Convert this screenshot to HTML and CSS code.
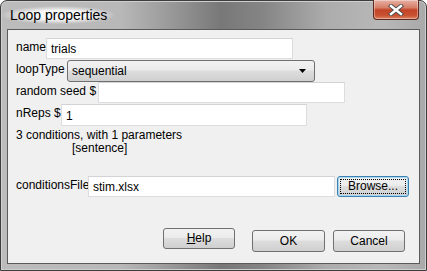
FILE: index.html
```html
<!DOCTYPE html>
<html>
<head>
<meta charset="utf-8">
<link rel="stylesheet" href="styles.css">
</head>
<body>
<div class="window">
  <div class="titlebar">
    <span class="title">Loop properties</span>
    <div class="close">
      <svg width="16" height="12" viewBox="0 0 16 12">
        <path d="M3 2 L13 10 M13 2 L3 10" stroke="#4a4a4a" stroke-width="4.2" stroke-linecap="square"/>
        <path d="M3 2 L13 10 M13 2 L3 10" stroke="#ffffff" stroke-width="2.4" stroke-linecap="square"/>
      </svg>
    </div>
  </div>
  <div class="client">
    <div class="row">
      <span class="label w-name">name</span>
      <div class="input i-name">trials</div>
    </div>
    <div class="row">
      <span class="label w-loop">loopType</span>
      <div class="select">
        <span>sequential</span>
        <svg class="arrow" width="8" height="5" viewBox="0 0 8 5"><path d="M0 0 H7 L3.5 4 Z" fill="#000"/></svg>
      </div>
    </div>
    <div class="row">
      <span class="label w-seed">random seed $</span>
      <div class="input i-seed"></div>
    </div>
    <div class="row">
      <span class="label w-reps">nReps $</span>
      <div class="input i-reps">1</div>
    </div>
    <div class="info">
      <div>3 conditions, with 1 parameters</div>
      <div class="params">[sentence]</div>
    </div>
    <div class="row file-row">
      <span class="label w-file">conditionsFile</span>
      <div class="input i-file">stim.xlsx</div>
      <div class="button browse"><span class="focus">Browse...</span></div>
    </div>
    <div class="buttons">
      <div class="button help"><span><u>H</u>elp</span></div>
      <div class="button ok">OK</div>
      <div class="button cancel">Cancel</div>
    </div>
  </div>
</div>
</body>
</html>
```
FILE: styles.css
```css
html, body {
  margin: 0;
  padding: 0;
}
body {
  width: 427px;
  height: 271px;
  overflow: hidden;
  font-family: "Liberation Sans", Arial, sans-serif;
  font-size: 12px;
  color: #000;
  background: #fff;
}
.window {
  box-sizing: border-box;
  width: 427px;
  height: 271px;
  display: flex;
  flex-direction: column;
  border: 1px solid #3d3d3d;
  border-radius: 7px 7px 0 0;
  padding: 0 6px 6px 6px;
  background: linear-gradient(90deg, #bcbcbc 0px, #b8b8b8 120px, #9c9c9c 165px, #787878 220px, #858585 262px, #acacac 325px, #b8b8b8 380px, #a9a9a9 427px);
  box-shadow: inset 0 0 0 1px #cfcfcf;
}
.titlebar {
  height: 28px;
  flex: none;
  display: flex;
  align-items: flex-start;
  justify-content: space-between;
}
.title {
  margin-top: 5px;
  margin-left: -5px;
  font-size: 14px;
  color: #000;
  padding: 0 8px;
  background: radial-gradient(ellipse at center, rgba(255,255,255,0.9) 35%, rgba(255,255,255,0) 72%);
  line-height: 18px;
}
.close {
  width: 44px;
  height: 19px;
  margin-top: -1px;
  margin-right: 1px;
  border: 1px solid #5e2a20;
  border-top: none;
  border-radius: 0 0 4px 4px;
  background: linear-gradient(180deg, #e7b1a4 0%, #d77f68 40%, #c4452a 52%, #c8502f 80%, #dc8465 100%);
  display: flex;
  align-items: center;
  justify-content: center;
  box-shadow: inset 0 0 0 1px rgba(255,255,255,0.35);
}
.client {
  flex: 1;
  display: flex;
  flex-direction: column;
  background: #f0f0f0;
  border: 1px solid #5a5a5a;
  padding: 8px 0 11px 8px;
}
.row {
  display: flex;
  align-items: flex-start;
  height: 22px;
}
.label {
  flex: none;
  line-height: 16px;
  padding-top: 1px;
}
.w-name { width: 30px; }
.w-loop { width: 51px; }
.w-seed { width: 82px; }
.w-reps { width: 45px; }
.w-file { width: 72px; }
.input {
  box-sizing: border-box;
  height: 21px;
  background: #fff;
  border: 1px solid #dcdde0;
  border-top-color: #d2d3d6;
  padding: 3px 0 0 4px;
  line-height: 15px;
  font-size: 12px;
}
.i-name { width: 247px; }
.i-seed { width: 247px; }
.i-reps { width: 246px; height: 22px; padding-top: 4px; }
.i-file { width: 247px; }
.select {
  box-sizing: border-box;
  width: 248px;
  height: 22px;
  border: 1px solid #707070;
  border-radius: 3px;
  background: linear-gradient(180deg, #f2f2f2 0%, #ebebeb 45%, #dddddd 50%, #cfcfcf 100%);
  display: flex;
  align-items: center;
  justify-content: space-between;
  padding: 0 7px 0 4px;
  line-height: 15px;
}
.arrow { margin-top: 1px; }
.info {
  margin-top: 3px;
  line-height: 13px;
  height: 47px;
}
.params {
  padding-left: 56px;
}
.file-row {
  height: 22px;
}
.button {
  box-sizing: border-box;
  width: 72px;
  height: 22px;
  border: 1px solid #707070;
  border-radius: 3px;
  background: linear-gradient(180deg, #f2f2f2 0%, #ebebeb 45%, #dddddd 50%, #cfcfcf 100%);
  display: flex;
  align-items: center;
  justify-content: center;
  line-height: 15px;
}
.browse {
  margin-left: 2px;
  height: 21px;
  border-color: #3c7fb1;
  box-shadow: inset 0 0 0 1px #a7d8f2;
  padding: 2px;
}
.browse .focus {
  flex: 1;
  align-self: stretch;
  display: flex;
  align-items: center;
  justify-content: center;
  outline: 1px dotted #000;
  outline-offset: -1px;
}
.buttons {
  margin-top: auto;
  display: flex;
  align-items: flex-start;
  padding-left: 147px;
}
.help {
  width: 72px;
  height: 21px;
}
.ok {
  margin-left: 17px;
  margin-top: 2px;
  width: 73px;
}
.cancel {
  margin-left: 8px;
  margin-top: 2px;
}
```
